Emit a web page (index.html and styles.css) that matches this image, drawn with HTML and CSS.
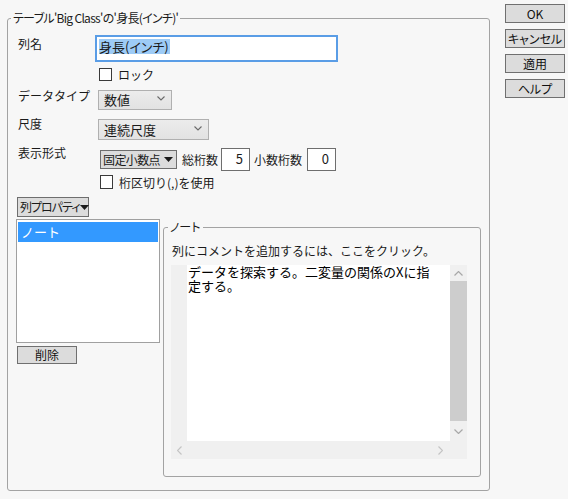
FILE: index.html
```html
<!DOCTYPE html>
<html lang="ja">
<head>
<meta charset="utf-8">
<link rel="stylesheet" href="styles.css">
</head>
<body>
<div class="dialog">
  <fieldset class="group main">
    <legend class="legend">テーブル'Big Class'の'身長(インチ)'</legend>
    <div class="row r1">
      <span class="label">列名</span>
      <div class="textinput"><span class="sel">身長(インチ)</span></div>
    </div>
    <div class="row r2">
      <span class="check"></span><span class="ctext">ロック</span>
    </div>
    <div class="row r3">
      <span class="label">データタイプ</span>
      <div class="combo c-type"><span>数値</span>
        <svg class="chev" width="8" height="5" viewBox="0 0 8 5"><polyline points="0.5,0.5 4,4 7.5,0.5" fill="none" stroke="#6a6a6a" stroke-width="1.1"/></svg>
      </div>
    </div>
    <div class="row r4">
      <span class="label">尺度</span>
      <div class="combo c-scale"><span>連続尺度</span>
        <svg class="chev" width="8" height="5" viewBox="0 0 8 5"><polyline points="0.5,0.5 4,4 7.5,0.5" fill="none" stroke="#6a6a6a" stroke-width="1.1"/></svg>
      </div>
    </div>
    <div class="row r5">
      <span class="label lbl5">表示形式</span>
      <div class="dbtn d-format"><span>固定小数点</span>
        <svg class="tri" width="9" height="5" viewBox="0 0 9 5"><polygon points="0,0 9,0 4.5,5" fill="#1a1a1a"/></svg>
      </div>
      <span class="small">総桁数</span>
      <div class="num">5</div>
      <span class="small">小数桁数</span>
      <div class="num">0</div>
    </div>
    <div class="row r6">
      <span class="check"></span><span class="ctext">桁区切り(,)を使用</span>
    </div>
    <div class="row r7">
      <div class="dbtn d-prop"><span>列プロパティ</span>
        <svg class="tri" width="9" height="5" viewBox="0 0 9 5"><polygon points="0,0 9,0 4.5,5" fill="#1a1a1a"/></svg>
      </div>
    </div>
    <div class="row r8">
      <div class="leftcol">
        <div class="listbox"><div class="item selected">ノート</div></div>
        <div class="btn del">削除</div>
      </div>
      <fieldset class="group note">
        <legend class="legend nlegend">ノート</legend>
        <div class="hint">列にコメントを追加するには、ここをクリック。</div>
        <div class="pane">
          <div class="gutter"></div>
          <div class="area"><div class="ln">データを探索する。二変量の関係のXに指</div><div class="ln">定する。</div></div>
          <div class="vbar">
            <div class="arrow up"><svg width="9" height="5" viewBox="0 0 9 5"><polyline points="0.5,4.5 4.5,0.5 8.5,4.5" fill="none" stroke="#a8a8a8" stroke-width="1.2"/></svg></div>
            <div class="thumb"></div>
            <div class="arrow down"><svg width="9" height="5" viewBox="0 0 9 5"><polyline points="0.5,0.5 4.5,4.5 8.5,0.5" fill="none" stroke="#a8a8a8" stroke-width="1.2"/></svg></div>
          </div>
          <div class="hbar">
            <svg width="5" height="9" viewBox="0 0 5 9"><polyline points="4.5,0.5 0.5,4.5 4.5,8.5" fill="none" stroke="#c4c4c4" stroke-width="1.2"/></svg>
            <svg width="5" height="9" viewBox="0 0 5 9"><polyline points="0.5,0.5 4.5,4.5 0.5,8.5" fill="none" stroke="#c4c4c4" stroke-width="1.2"/></svg>
          </div>
        </div>
      </fieldset>
    </div>
  </fieldset>
  <div class="buttons">
    <div class="btn side">OK</div>
    <div class="btn side">キャンセル</div>
    <div class="btn side">適用</div>
    <div class="btn side">ヘルプ</div>
  </div>
</div>
</body>
</html>
```

FILE: styles.css
```css
* { box-sizing: border-box; }
html, body {
  margin: 0;
  padding: 0;
  background: #f7f7f7;
  width: 568px;
  height: 499px;
  overflow: hidden;
}
body {
  font-family: "Noto Sans CJK JP", "Noto Sans", sans-serif;
  font-size: 12px;
  color: #1a1a1a;
  line-height: 16px;
}
.dialog {
  display: flex;
  align-items: flex-start;
  padding: 4px 0 0 7px;
}
.group {
  margin: 0;
  border: 1px solid #a3a3a3;
  border-radius: 3px;
  min-width: 0;
}
.main {
  width: 483px;
  margin-top: 6px;
  padding: 9px 8px 13px 8px;
  display: flex;
  flex-direction: column;
}
.legend {
  padding: 0 2px;
  margin-left: -5px;
  line-height: 16px;
  font-feature-settings: "palt" 1;
  letter-spacing: -0.7px;
  color: #1a1a1a;
  white-space: nowrap;
}
.row { display: flex; align-items: flex-start; white-space: nowrap; }
.label {
  width: 79px;
  padding-left: 2px;
  flex: none;
}
.r1 { height: 27px; }
.r1 .label { margin-top: 1px; }
.textinput {
  width: 243px;
  height: 27px;
  border: 2px solid #5a9de6;
  background: #fff;
  padding: 2px 0 0 2px;
  font-size: 13px;
  line-height: 15px;
}
.sel {
  background: #9dcbf6;
  display: inline-block;
  height: 15px;
  padding-right: 1px;
  font-feature-settings: "palt" 1;
}
.r2 { margin-top: 6px; padding-left: 83px; align-items: center; }
.check {
  width: 13px;
  height: 13px;
  border: 1px solid #3a3a3a;
  background: #fff;
  flex: none;
}
.ctext { margin-left: 6px; line-height: 13px; }
.r3 { margin-top: 9px; }
.r3 .label { margin-top: -2px; }
.combo {
  margin-left: 3px;
  height: 20px;
  border: 1px solid #b0b0b0;
  background: linear-gradient(#ececec, #e2e2e2);
  display: flex;
  align-items: center;
  justify-content: space-between;
  padding: 0 6px 0 5px;
  font-size: 13px;
  flex: none;
}
.c-type { width: 74px; }
.r4 { margin-top: 9px; }
.r4 .label { margin-top: -3px; }
.c-scale { width: 111px; height: 21px; }
.chev { flex: none; margin-top: -3px; }
.r5 { margin-top: 8px; align-items: center; height: 23px; }
.r5 .lbl5 { align-self: flex-start; margin-top: -3px; }
.dbtn {
  height: 19px;
  border: 1px solid #6e6e6e;
  background: #dcdcdc;
  display: flex;
  align-items: center;
  justify-content: space-between;
  padding: 0 3px 0 2px;
  font-size: 12px;
  flex: none;
  white-space: nowrap;
}
.tri { flex: none; }
.d-format { width: 77px; margin-left: 5px; letter-spacing: -0.6px; }
.small { margin: 0 3px 0 5px; font-size: 12px; }
.num {
  width: 29px;
  height: 23px;
  border: 1px solid #6e6e6e;
  background: #fff;
  text-align: right;
  padding: 2px 6px 0 0;
  font-size: 13px;
  line-height: 15px;
  flex: none;
}
.num + .small { margin-left: 4px; margin-right: 5px; }
.r6 { margin-top: 4px; padding-left: 84px; align-items: center; }
.r6 .check { height: 14px; }
.r7 { margin-top: 8px; padding-left: 1px; }
.d-prop { width: 72px; height: 20px; font-feature-settings: "palt" 1; letter-spacing: -1px; padding-right: 4px; }
.r8 { margin-top: 2px; align-items: flex-start; }
.leftcol { width: 144px; flex: none; }
.listbox {
  height: 124px;
  border: 1px solid #a0a0a0;
  background: #fff;
  padding: 2px 1px 0 1px;
}
.item {
  height: 20px;
  padding-left: 3px;
  line-height: 20px;
  font-size: 13px;
}
.selected { background: #3399ff; color: #fff; }
.btn {
  height: 19px;
  border: 1px solid #707070;
  background: #dcdcdc;
  text-align: center;
  line-height: 17px;
  font-size: 12px;
  font-feature-settings: "palt" 1;
  color: #111;
}
.del { width: 60px; height: 18px; line-height: 16px; margin: 3px 0 0 1px; }
.note {
  flex: 1;
  margin-left: 3px;
  padding: 8px 13px 17px 7px;
}
.nlegend { margin-left: -3px; letter-spacing: 0; }
.hint { height: 16px; padding-left: 1px; font-size: 12px; }
.pane {
  margin-top: 6px;
  height: 194px;
  background: #f0f0f0;
  display: grid;
  grid-template-columns: 16px 1fr 17px;
  grid-template-rows: 176px 18px;
}
.area {
  background: #fff;
  padding: 0 0 0 1px;
  font-size: 13px;
  color: #000;
  white-space: nowrap;
  min-width: 0;
}
.ln { height: 14px; line-height: 14px; }
.vbar {
  display: flex;
  flex-direction: column;
}
.arrow {
  height: 16px;
  display: flex;
  align-items: center;
  justify-content: center;
}
.thumb { height: 140px; background: #cdcdcd; }
.down { height: 20px; }
.hbar {
  grid-column: 1 / 4;
  display: flex;
  align-items: center;
  justify-content: space-between;
  padding: 0 24px 0 6px;
}
.buttons {
  margin-left: 15px;
  display: flex;
  flex-direction: column;
  gap: 6px;
}
.side { width: 60px; }
```
